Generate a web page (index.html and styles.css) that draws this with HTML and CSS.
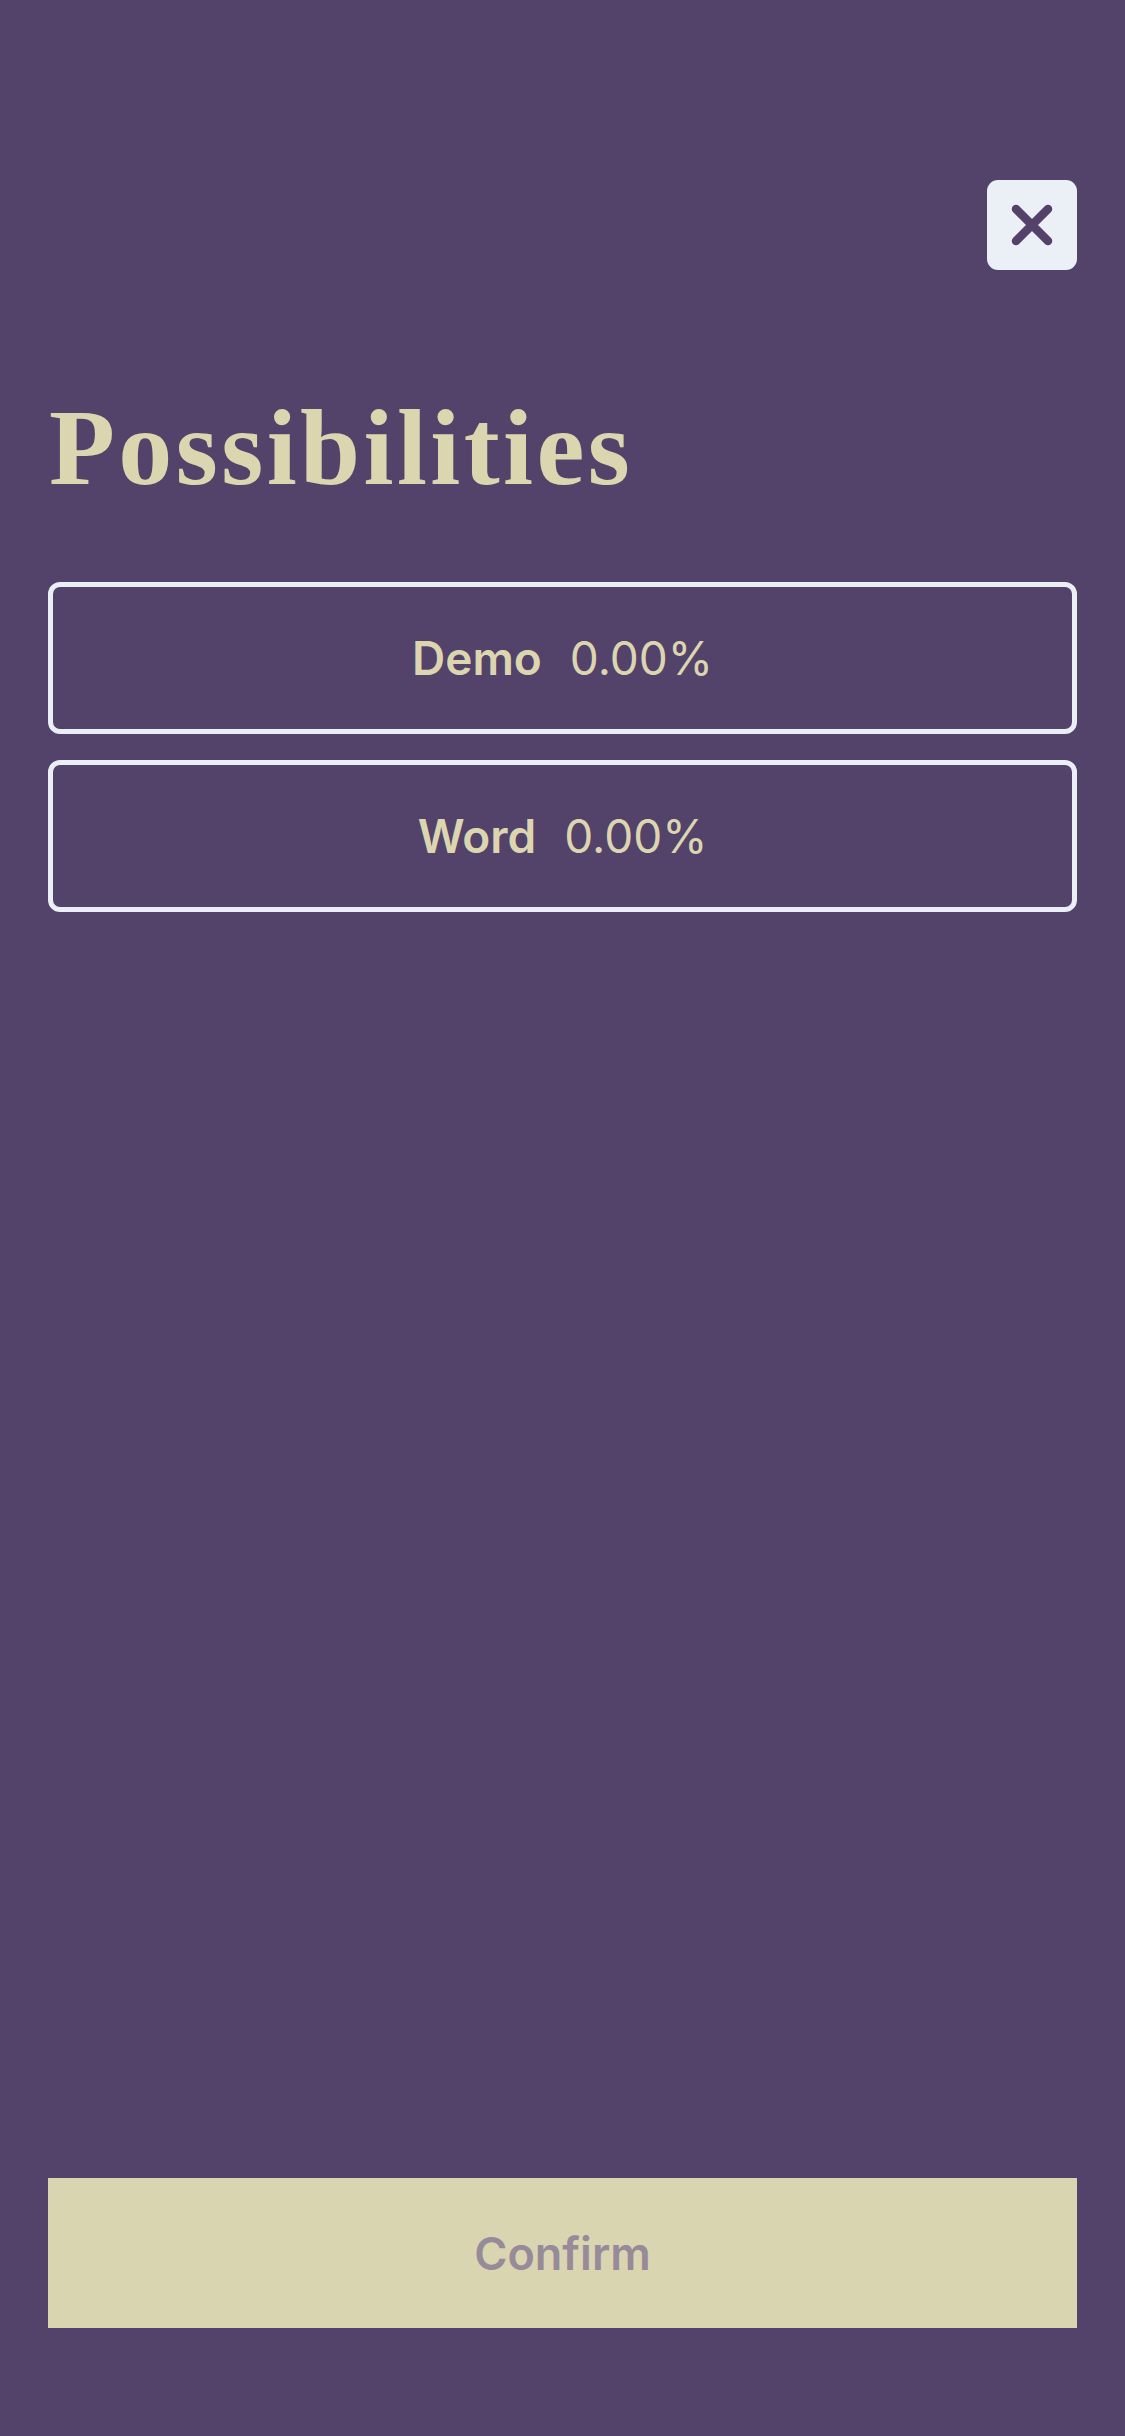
FILE: index.html
```html
<!DOCTYPE html>
<html lang="en">
<head>
<meta charset="utf-8">
<title>Possibilities</title>
<link rel="stylesheet" href="styles.css">
</head>
<body>
<div class="screen">
  <div class="topbar">
    <button class="close" aria-label="Close">
      <svg width="90" height="90" viewBox="0 0 90 90">
        <path d="M29 29 L61 61 M61 29 L29 61" stroke="#54426b" stroke-width="8.5" stroke-linecap="round" fill="none"/>
      </svg>
    </button>
  </div>
  <h1 class="title">Possibilities</h1>
  <div class="options">
    <div class="option"><span class="name">Demo</span><span class="pct">0.00%</span></div>
    <div class="option"><span class="name">Word</span><span class="pct">0.00%</span></div>
  </div>
  <button class="confirm">Confirm</button>
</div>
</body>
</html>
```
FILE: styles.css
```css
html, body {
  margin: 0;
  padding: 0;
  background: #53426a;
}
.screen {
  min-height: 2436px;
  box-sizing: border-box;
  padding: 180px 48px 108px 48px;
  display: flex;
  flex-direction: column;
}
.topbar {
  display: flex;
  justify-content: flex-end;
}
.close {
  width: 90px;
  height: 90px;
  padding: 0;
  border: none;
  border-radius: 11px;
  background: #eaf0f6;
  display: flex;
  align-items: center;
  justify-content: center;
}
.close svg { display: block; }
.title {
  margin: 124px 0 0 0;
  font-family: "Liberation Serif", "Times New Roman", serif;
  font-weight: 700;
  font-size: 108px;
  line-height: 108px;
  letter-spacing: 3.4px;
  color: #dbd5b0;
  padding-left: 1px;
}
.options {
  margin-top: 80px;
  display: flex;
  flex-direction: column;
  gap: 26px;
}
.option {
  height: 152px;
  box-sizing: border-box;
  border: 5px solid #e9eff5;
  border-radius: 12px;
  display: flex;
  align-items: center;
  justify-content: center;
  gap: 28px;
  font-family: Inter, "Liberation Sans", sans-serif;
  font-size: 46px;
  color: #dbd5b0;
}
.option .name { font-weight: 600; }
.option .pct { font-weight: 400; }
.confirm {
  margin-top: auto;
  height: 150px;
  border: none;
  border-radius: 0;
  background: #dad5b1;
  color: #978b99;
  font-family: Inter, "Liberation Sans", sans-serif;
  font-weight: 600;
  font-size: 45px;
}
```
